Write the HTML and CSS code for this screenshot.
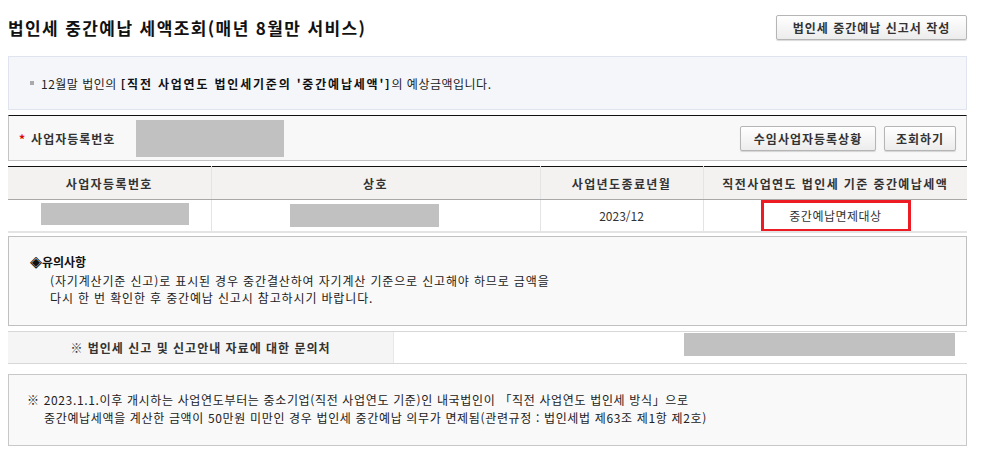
FILE: index.html
```html
<!DOCTYPE html>
<html lang="ko">
<head>
    <meta charset="UTF-8">
    <title>법인세 중간예납 세액조회</title>
    <link rel="stylesheet" href="styles.css">
</head>
<body>

    <div class="wrap">
        <div class="title-row">
            <h2>법인세 중간예납 세액조회(매년 8월만 서비스)</h2>
            <button class="btn btn-top">법인세 중간예납 신고서 작성</button>
        </div>

        <div class="info-box">
            <p><span class="bullet"></span>12월말 법인의 <b>[직전 사업연도 법인세기준의 '중간예납세액']</b>의 예상금액입니다.</p>
        </div>

        <!-- 조회 조건 -->
        <div class="search-box">
            <span class="req">*</span>
            <label class="search-label">사업자등록번호</label>
            <div class="masked input-mask"></div>
            <div class="search-btns">
                <button class="btn">수임사업자등록상황</button>
                <button class="btn">조회하기</button>
            </div>
        </div>

        <table class="result">
            <colgroup>
                <col class="c1">
                <col class="c2">
                <col class="c3">
                <col class="c4">
            </colgroup>
            <thead>
                <tr>
                    <th>사업자등록번호</th>
                    <th>상호</th>
                    <th>사업년도종료년월</th>
                    <th>직전사업연도 법인세 기준 중간예납세액</th>
                </tr>
            </thead>
            <tbody>
                <tr>
                    <td><div class="masked cell-mask no-mask"></div></td>
                    <td><div class="masked cell-mask name-mask"></div></td>
                    <td class="mid">2023/12</td>
                    <td><div class="exempt">중간예납면제대상</div></td>
                </tr>
            </tbody>
        </table>

        <div class="notice-box">
            <p class="notice-title">◈유의사항</p>
            <p class="indent">(자기계산기준 신고)로 표시된 경우 중간결산하여 자기계산 기준으로 신고해야 하므로 금액을</p>
            <p class="indent">다시 한 번 확인한 후 중간예납 신고시 참고하시기 바랍니다.</p>
        </div>

        <div class="contact-row">
            <div class="contact-label">※ 법인세 신고 및 신고안내 자료에 대한 문의처</div>
            <div class="contact-value"><div class="masked contact-mask"></div></div>
        </div>

        <div class="bottom-box">
            <p>※ 2023.1.1.이후 개시하는 사업연도부터는 중소기업(직전 사업연도 기준)인 내국법인이 「직전 사업연도 법인세 방식」으로</p>
            <p class="indent2">중간예납세액을 계산한 금액이 50만원 미만인 경우 법인세 중간예납 의무가 면제됨(관련규정 : 법인세법 제63조 제1항 제2호)</p>
        </div>
    </div>

</body>
</html>
```

FILE: styles.css
```css
body {
    margin: 0;
    padding: 0 8px;
    font-family: "Noto Sans CJK KR", "Noto Sans", sans-serif;
    font-size: 12px;
    color: #222;
    background: white;
}

.wrap {
    width: 959px;
}

p {
    margin: 0;
}

.title-row {
    display: flex;
    justify-content: space-between;
    align-items: center;
    padding-top: 15px;
    height: 25px;
}

h2 {
    margin: 0;
    font-size: 17px;
    font-weight: bold;
    color: #111;
    letter-spacing: 1.4px;
}

.btn {
    font-family: inherit;
    font-size: 12px;
    font-weight: bold;
    color: #333;
    height: 25px;
    padding: 0;
    background: linear-gradient(#ffffff, #ececec);
    border: 1px solid #b5b5b5;
    border-radius: 2px;
    box-shadow: 0 1px 1px rgba(0, 0, 0, 0.15);
    cursor: pointer;
    letter-spacing: 1px;
}

.btn-top {
    width: 191px;
}

.info-box {
    margin-top: 16px;
    height: 52px;
    background: #f4f6fa;
    border: 1px solid #dfe4ee;
    display: flex;
    align-items: center;
    padding-left: 21px;
}

.info-box p {
    display: flex;
    align-items: center;
    white-space: pre;
    color: #222;
    letter-spacing: 0.5px;
}

.info-box b {
    color: #111;
    letter-spacing: 1.8px;
}

.bullet {
    width: 4px;
    height: 4px;
    background: #aaa;
    margin-right: 7px;
}

.search-box {
    margin-top: 5px;
    height: 44px;
    background: #f8f8f8;
    border: 1px solid #c4c4c4;
    border-top: 1px solid #111;
    display: flex;
    align-items: center;
    padding-left: 10px;
}

.req {
    color: #d00;
    font-weight: bold;
    margin-right: 6px;
}

.search-label {
    font-weight: bold;
    color: #333;
    width: 105px;
    letter-spacing: 1px;
}

.masked {
    background: #c1c1c1;
}

.input-mask {
    width: 148px;
    height: 37px;
}

.search-btns {
    margin-left: auto;
    margin-right: 10px;
    display: flex;
    gap: 8px;
}

.search-btns .btn:first-child {
    width: 136px;
}

.search-btns .btn:last-child {
    width: 72px;
}

.result {
    margin-top: 5px;
    width: 959px;
    border-collapse: collapse;
    border-top: 1px solid #111;
}

.c1 { width: 203px; }
.c2 { width: 329px; }
.c3 { width: 163px; }
.c4 { width: 264px; }

.result th {
    height: 32px;
    background: #f3f2f0;
    color: #333;
    font-weight: bold;
    letter-spacing: 1.4px;
    border-left: 1px solid #e4e4e4;
    border-bottom: 1px solid #a8a8a8;
    padding: 0;
}

.result td {
    height: 31px;
    vertical-align: top;
    border-left: 1px solid #e4e4e4;
    border-bottom: 2px solid #e4e4e4;
    padding: 0;
    color: #333;
}

.result td.mid {
    text-align: center;
    vertical-align: middle;
}

.result th:first-child,
.result td:first-child {
    border-left: none;
}

.cell-mask {
    width: 148px;
    height: 22px;
}

.no-mask {
    margin: 3px 0 0 33px;
}

.name-mask {
    width: 149px;
    height: 23px;
    margin: 4px 0 0 78px;
}

.exempt {
    width: 144px;
    height: 26px;
    line-height: 26px;
    text-align: center;
    letter-spacing: 0.5px;
    border: 3px solid #ed1c24;
    margin: 0 0 -2px 57px;
}

.notice-box {
    margin-top: 3px;
    height: 90px;
    background: #f9f9f9;
    border: 1px solid #c0c0c0;
    padding: 16px 0 0 21px;
    box-sizing: border-box;
    line-height: 17px;
}

.notice-title {
    font-weight: bold;
    color: #111;
    margin-bottom: 2px;
}

.indent {
    padding-left: 20px;
    letter-spacing: 0.85px;
}

.contact-row {
    margin-top: 5px;
    display: flex;
    height: 31px;
    border-top: 1px solid #d8d8d8;
    border-bottom: 1px solid #d8d8d8;
}

.contact-label {
    width: 385px;
    background: #f5f5f5;
    border-right: 1px solid #e8e8e8;
    font-weight: bold;
    color: #333;
    display: flex;
    align-items: center;
    justify-content: center;
    letter-spacing: 1px;
}

.contact-value {
    flex: 1;
    background: white;
    display: flex;
    justify-content: flex-end;
    padding-right: 12px;
}

.contact-mask {
    width: 271px;
    height: 23px;
    margin-top: 1px;
}

.bottom-box {
    margin-top: 10px;
    height: 72px;
    background: #f9f9f9;
    border: 1px solid #c8c8c8;
    box-sizing: border-box;
    padding: 16px 0 0 18px;
    line-height: 18px;
    color: #222;
    letter-spacing: 0.65px;
}

.indent2 {
    padding-left: 17px;
}
```
